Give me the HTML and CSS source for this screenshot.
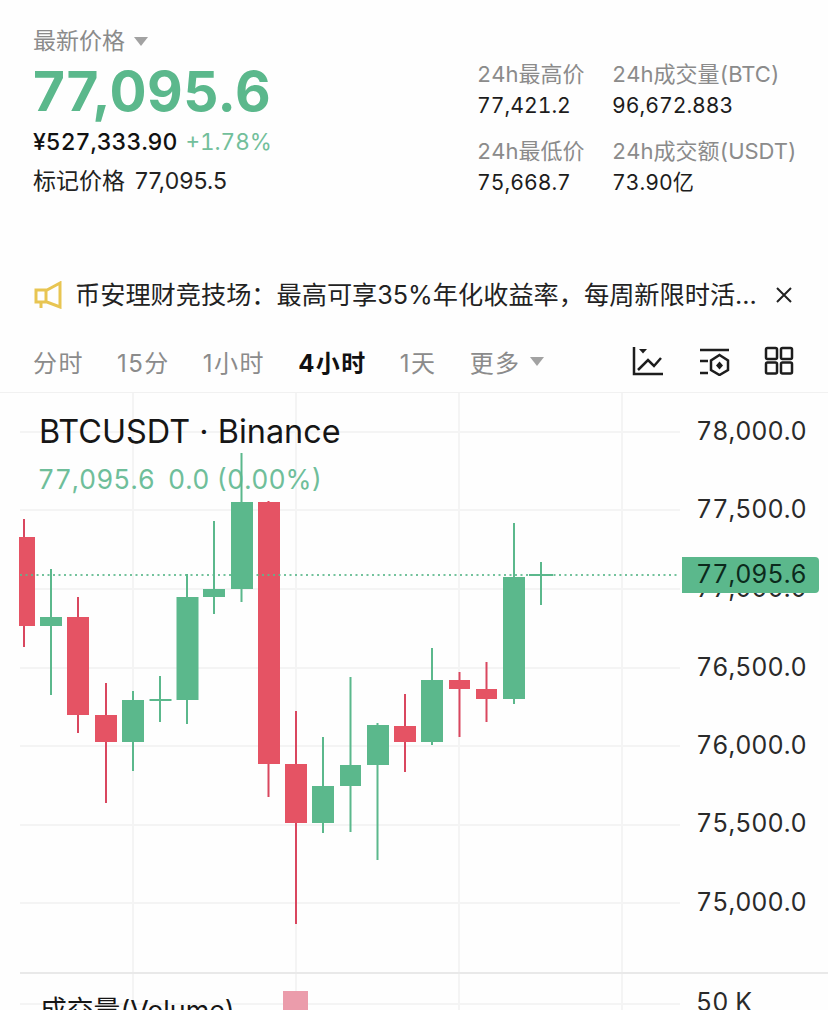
FILE: index.html
```html
<!DOCTYPE html>
<html lang="zh-CN">
<head>
<meta charset="utf-8">
<title>BTCUSDT</title>
<link rel="stylesheet" href="styles.css">
</head>
<body>
<div class="page">
  <header class="ticker">
    <div class="main">
      <div class="latest"><span>最新价格</span><i class="tri"></i></div>
      <div class="price">77,095.6</div>
      <div class="fiat"><b>¥527,333.90</b><span class="pct">+1.78%</span></div>
      <div class="mark"><span>标记价格</span><span>77,095.5</span></div>
    </div>
    <div class="stats">
      <div class="stat"><div class="k">24h最高价</div><div class="v">77,421.2</div></div>
      <div class="stat"><div class="k">24h成交量(BTC)</div><div class="v">96,672.883</div></div>
      <div class="stat"><div class="k">24h最低价</div><div class="v">75,668.7</div></div>
      <div class="stat"><div class="k">24h成交额(USDT)</div><div class="v">73.90亿</div></div>
    </div>
  </header>
  <div class="notice">
    <svg class="horn" viewBox="0 0 28 28" width="28" height="28"><path d="M26 2 L13 9 H2 V21 H13 L26 26 Z M12 9 V21 M7 21 V27"/></svg>
    <span class="notice-text">币安理财竞技场：最高可享35%年化收益率，每周新限时活...</span>
    <svg class="close" viewBox="0 0 16 16" width="16" height="16"><path d="M1 1 L15 15 M15 1 L1 15"/></svg>
  </div>
  <nav class="tabs">
    <a>分时</a><a>15分</a><a>1小时</a><a class="on">4小时</a><a>1天</a>
    <a class="more">更多<i class="tri"></i></a>
    <div class="tools">
      <svg class="tool" viewBox="0 0 32 30" width="32" height="30"><path d="M2 1 V28 H31 M6 24 L16 14 L22 20 L29 12"/><path class="solid" d="M7 3 H15 L11 7.500 Z"/></svg>
      <svg class="tool" viewBox="0 0 32 30" width="32" height="30"><path d="M2 4 H31 M2 15 H10 M2 27 H10"/><path d="M21.500 10 L30 15.500 V25 L21.500 30 L13 25 V15.500 Z" transform="translate(0 -1)"/><path class="solid" d="M21.500 15.500 L25 19.500 L21.500 23.500 L18 19.500 Z"/></svg>
      <svg class="tool" viewBox="0 0 30 30" width="30" height="30"><rect x="2" y="2" width="11" height="11" rx="1.500"/><rect x="17" y="2" width="11" height="11" rx="1.500"/><rect x="2" y="16.500" width="11" height="11" rx="1.500"/><rect x="17" y="16.500" width="11" height="11" rx="1.500"/></svg>
    </div>
  </nav>
  <svg class="chart" viewBox="0 393 828 617" width="828" height="617">
    <g class="grid">
      <path d="M20 432 H680 M20 510 H680 M20 589 H680 M20 668 H680 M20 746 H680 M20 825 H680 M20 903 H680 M20 1004 H680"/>
      <path d="M133 393 V1010 M296 393 V1010 M459 393 V1010 M622 393 V1010"/>
      <path class="sep" d="M20 973 H828"/>
    </g>
    <text class="title" x="39" y="443">BTCUSDT · Binance</text>
    <text class="ohlc" x="37.500" y="489">77,095.6</text>
    <text class="ohlc" x="168" y="489">0.0 (0.00%)</text>
    <g class="up">
      <path d="M51 569 V695 M133 691 V771 M160 676 V722 M187 574 V724 M214 521 V614 M241.500 453 V602 M323 737 V833 M350.500 677 V832 M377.500 723 V860 M432 648 V745 M514 523 V704 M541 562 V605 M529 575 H553"/>
      <rect x="40" y="617" width="22" height="9"/>
      <rect x="122" y="700" width="22" height="42"/>
      <rect x="149.500" y="699" width="22" height="2"/>
      <rect x="176.500" y="597" width="22" height="103"/>
      <rect x="203" y="589" width="22" height="8"/>
      <rect x="231" y="502" width="22" height="87"/>
      <rect x="312" y="786" width="22" height="37"/>
      <rect x="340" y="765" width="21" height="21"/>
      <rect x="367" y="725" width="22" height="40"/>
      <rect x="421" y="680" width="22" height="62"/>
      <rect x="503" y="577" width="22" height="122"/>
    </g>
    <g class="down">
      <path d="M24 519 V647 M78 597 V733 M106 683 V803 M268.500 501 V797 M296 711 V924 M405 694 V772 M459.500 672 V737 M486.500 662 V722"/>
      <rect x="19" y="537" width="16" height="89"/>
      <rect x="67" y="617" width="22" height="98"/>
      <rect x="95" y="715" width="22" height="27"/>
      <rect x="258" y="502" width="22" height="262"/>
      <rect x="285" y="764" width="22" height="59"/>
      <rect x="394" y="726" width="22" height="16"/>
      <rect x="449" y="680" width="21" height="9"/>
      <rect x="476" y="689" width="21" height="10"/>
    </g>
    <line class="dots" x1="20" y1="575" x2="680" y2="575"/>
    <rect class="vol" x="283" y="991" width="25" height="19"/>
    <text class="vol-title" x="40" y="1020">成交量(Volume)</text>
    <g class="axis">
      <text x="696" y="440">78,000.0</text>
      <text x="696" y="518">77,500.0</text>
      <text x="696" y="597">77,000.0</text>
      <text x="696" y="676">76,500.0</text>
      <text x="696" y="754">76,000.0</text>
      <text x="696" y="832">75,500.0</text>
      <text x="696" y="911">75,000.0</text>
      <text x="696" y="1011">50 K</text>
    </g>
    <path class="tag" d="M682 557 H815 a4 4 0 0 1 4 4 V589 a4 4 0 0 1 -4 4 H682 Z"/>
    <text class="tag-text" x="696" y="583">77,095.6</text>
  </svg>
</div>
</body>
</html>
```
FILE: styles.css
```css
* { box-sizing: border-box; }
html, body { margin: 0; padding: 0; background: #fefefe; }
body { font-family: Inter, "Noto Sans CJK SC", sans-serif; color: #1c1c1c; }
.page { width: 828px; height: 1010px; overflow: hidden; }

.ticker { height: 270px; padding: 25px 0 0 33px; display: flex; }
.main { width: 444px; }
.latest { display: flex; align-items: center; gap: 9px; font-size: 23px; line-height: 32px; color: #8b8b8b; }
.tri { display: inline-block; width: 0; height: 0; border-left: 7.500px solid transparent; border-right: 7.500px solid transparent; border-top: 9px solid #a2a2a2; }
.price { font-size: 55px; font-weight: 700; line-height: 66px; margin-top: 1px; color: #5bb88c; letter-spacing: 0.5px; }
.fiat { display: flex; align-items: center; gap: 9px; font-size: 23px; line-height: 32px; margin-top: 2px; font-feature-settings: "tnum" 1; }
.fiat b { font-weight: 500; color: #111; }
.pct { color: #72bf9b; font-size: 22.500px; margin-left: -1px; }
.mark { display: flex; gap: 10px; font-size: 23px; line-height: 32px; margin-top: 7px; color: #222; }
.stats { display: grid; grid-template-columns: 135px auto; grid-auto-rows: 77px; padding-top: 34px; font-feature-settings: "tnum" 1; }
.k { font-size: 22px; line-height: 30px; color: #8b8b8b; white-space: nowrap; }
.v { font-size: 21.200px; line-height: 30px; color: #1c1c1c; white-space: nowrap; margin-top: 1px; }

.notice { height: 50px; padding-left: 34px; display: flex; align-items: center; }
.horn { fill: none; stroke: #e8c552; stroke-width: 3; flex: none; }
.notice-text { margin-left: 13px; font-size: 25.200px; line-height: 34px; color: #222; white-space: nowrap; flex: none; width: 701px; }
.close { fill: none; stroke: #222; stroke-width: 2; flex: none; }

.tabs { height: 73px; padding: 10px 34px 0 33px; display: flex; align-items: center; gap: 33px; font-size: 24px; letter-spacing: 1.500px; color: #8b8b8b; border-bottom: 1px solid #f1f1f1; }
.tabs a { white-space: nowrap; }
.tabs .on { color: #111; font-weight: 700; }
.more { display: flex; align-items: center; gap: 9px; }
.tools { display: flex; align-items: center; gap: 34px; margin-left: auto; }
.tool { fill: none; stroke: #1d1d1d; stroke-width: 2.500; }
.tool .solid { fill: #1d1d1d; stroke: none; }

.chart { display: block; }
.grid path { fill: none; stroke: #f4f4f4; stroke-width: 2; }
.grid .sep { stroke: #e9e9e9; }
.title { font-size: 32.400px; fill: #161616; }
.vol-title { font-size: 26.800px; fill: #161616; }
.ohlc { font-size: 26.500px; fill: #6fbe9a; font-feature-settings: "tnum" 1; }
.dots { stroke: #5bb88c; stroke-width: 2; stroke-dasharray: 2 3.500; opacity: 0.85; }
.up rect { fill: #5bb88c; }
.up path { stroke: #5bb88c; stroke-width: 2; fill: none; }
.down rect { fill: #e55364; }
.down path { stroke: #d9475f; stroke-width: 2; fill: none; }
.vol { fill: #eb9cab; }
.axis text { font-size: 25px; fill: #2a2a2a; font-feature-settings: "tnum" 1; }
.tag { fill: #5bb88c; }
.tag-text { font-size: 25px; fill: #0c2a1c; font-feature-settings: "tnum" 1; }
```
